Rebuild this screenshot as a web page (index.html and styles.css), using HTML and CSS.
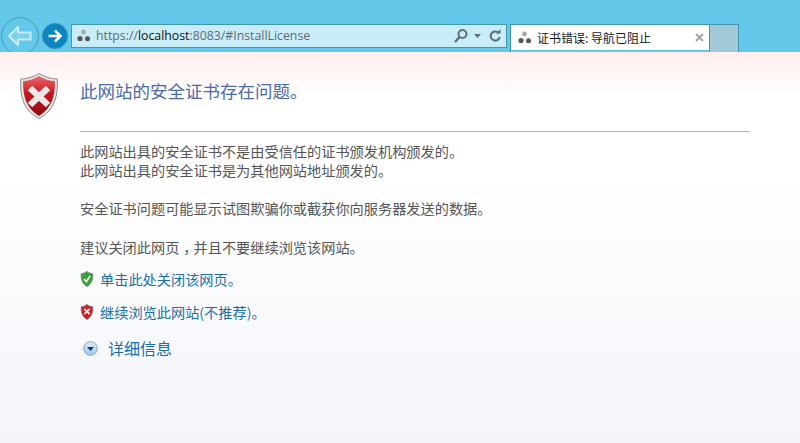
FILE: index.html
```html
<!DOCTYPE html>
<html lang="zh-CN">
<head>
<meta charset="utf-8">
<title>证书错误: 导航已阻止</title>
<link rel="stylesheet" href="styles.css">
</head>
<body>
<header class="toolbar">
  <svg class="back" width="40" height="40" viewBox="0 0 40 40">
    <circle cx="19" cy="19" r="18.500" fill="#63c8ea" stroke="#4a9db8" stroke-width="1"/>
    <path d="M17 10 L8 19 L17 28 V22.500 H29.500 V15.500 H17 Z" fill="#7fcfe9" stroke="#c4ecf8" stroke-width="2.200" stroke-linejoin="round"/>
  </svg>
  <svg class="forward" width="26" height="26" viewBox="0 0 26 26">
    <circle cx="13" cy="13" r="12.500" fill="#0a85c2" stroke="#3f8aa8"/>
    <path d="M6.500 13 H18 M13 7.500 L18.500 13 L13 18.500" fill="none" stroke="#fff" stroke-width="2.600"/>
  </svg>
  <div class="address">
    <svg class="site" width="14" height="14" viewBox="0 0 14 14">
      <circle cx="6.500" cy="3" r="2.400" fill="#a8a8a8"/>
      <circle cx="3" cy="9.500" r="2.600" fill="#555"/>
      <circle cx="10.500" cy="9.800" r="2.500" fill="#555"/>
    </svg>
    <span class="url">https://<b class="host">localhost</b>:8083/#InstallLicense</span>
    <svg class="tool-search" width="27" height="16" viewBox="0 0 27 16">
      <circle cx="8.500" cy="6" r="4" fill="none" stroke="#5f6f75" stroke-width="2"/>
      <path d="M5.500 9 L1 14" stroke="#5f6f75" stroke-width="2.400"/>
      <path d="M20 6 H27 L23.500 10 Z" fill="#5f6f75"/>
    </svg>
    <svg class="tool-refresh" width="14" height="16" viewBox="0 0 14 16">
      <path d="M10.800 5 A4.600 4.600 0 1 0 11.800 9" fill="none" stroke="#5f6f75" stroke-width="2"/>
      <path d="M8 5.500 H12.500 V1 Z" fill="#5f6f75"/>
    </svg>
  </div>
  <div class="tab">
    <div class="tab-active">
      <svg class="site" width="14" height="14" viewBox="0 0 14 14">
        <circle cx="6.500" cy="3" r="2.400" fill="#a8a8a8"/>
        <circle cx="3" cy="9.500" r="2.600" fill="#555"/>
        <circle cx="10.500" cy="9.800" r="2.500" fill="#555"/>
      </svg>
      <span class="tab-title">证书错误: 导航已阻止</span>
      <svg class="tab-close" width="9" height="9" viewBox="0 0 9 9">
        <path d="M1 1 L8 8 M8 1 L1 8" stroke="#a5a5a5" stroke-width="2"/>
      </svg>
    </div>
    <div class="tab-new"></div>
  </div>
</header>
<main class="page">
  <div class="heading">
    <svg class="shield-big" width="40" height="48" viewBox="0 0 40 48">
      <defs>
        <linearGradient id="rb" x1="0" y1="0" x2="0" y2="1">
          <stop offset="0" stop-color="#e8686c"/>
          <stop offset="0.450" stop-color="#c8141e"/>
          <stop offset="1" stop-color="#8e0a10"/>
        </linearGradient>
      </defs>
      <path d="M19 1.500 C13 5 7 7 .8 7 C0 24 3 38 19 46.500 C35 38 38 24 37.200 7 C31 7 25 5 19 1.500 Z" fill="#e6e6e6" stroke="#8c8c8c"/>
      <path d="M19 4 C14 7 8 9 3 9 C3 24 6 36 19 44 C32 36 35 24 35 9 C30 9 24 7 19 4 Z" fill="url(#rb)"/>
      <path d="M10 16 L28 33 M28 16 L10 33" stroke="#ece8e8" stroke-width="6.500"/>
    </svg>
    <h1 class="title">此网站的安全证书存在问题。</h1>
  </div>
  <hr class="rule">
  <p class="text">此网站出具的安全证书不是由受信任的证书颁发机构颁发的。<br>此网站出具的安全证书是为其他网站地址颁发的。</p>
  <p class="text gap-a">安全证书问题可能显示试图欺骗你或截获你向服务器发送的数据。</p>
  <p class="text gap-b">建议关闭此网页<span class="comma">，</span>并且不要继续浏览该网站。</p>
  <div class="link-row first">
    <svg width="14" height="16" viewBox="0 0 15 18">
      <path d="M7.500 .5 C5.500 2 3 3 1 3 C.5 9 2 14 7.500 17.500 C13 14 14.500 9 14 3 C12 3 9.500 2 7.500 .5 Z" fill="#35a33b" stroke="#7b8a7c"/>
      <path d="M4 9 L6.800 12 L11 5.500" fill="none" stroke="#fff" stroke-width="2"/>
    </svg>
    <a class="link">单击此处关闭该网页。</a>
  </div>
  <div class="link-row second">
    <svg width="14" height="16" viewBox="0 0 15 18">
      <path d="M7.500 .5 C5.500 2 3 3 1 3 C.5 9 2 14 7.500 17.500 C13 14 14.500 9 14 3 C12 3 9.500 2 7.500 .5 Z" fill="#c9202c" stroke="#8a7b7c"/>
      <path d="M4.500 5.500 L10.500 11.500 M10.500 5.500 L4.500 11.500" stroke="#f2eaea" stroke-width="2"/>
    </svg>
    <a class="link">继续浏览此网站(不推荐)。</a>
  </div>
  <div class="details">
    <svg width="15" height="15" viewBox="0 0 15 15">
      <defs>
        <linearGradient id="bb" x1="0" y1="0" x2="0" y2="1">
          <stop offset="0" stop-color="#e4f0fa"/>
          <stop offset="1" stop-color="#9fc6e8"/>
        </linearGradient>
      </defs>
      <circle cx="7.500" cy="7.500" r="6.800" fill="url(#bb)" stroke="#7fa6c6"/>
      <path d="M4 6 H11 L7.500 10 Z" fill="#123a7a"/>
    </svg>
    <a class="details-text">详细信息</a>
  </div>
</main>
</body>
</html>
```
FILE: styles.css
```css
* { box-sizing: border-box; }
html, body { margin: 0; height: 100%; }
body {
  width: 800px;
  height: 443px;
  overflow: hidden;
  display: flex;
  flex-direction: column;
  font-family: "Noto Sans CJK SC", "Noto Sans", sans-serif;
}
.toolbar {
  height: 52px;
  flex: none;
  background: #63c8ea;
  display: flex;
  align-items: flex-start;
  padding: 17px 0 0 1px;
  overflow: hidden;
}
.back { flex: none; }
.forward { flex: none; margin: 6px 0 0 1px; }
.address {
  flex: none;
  width: 436px;
  height: 24px;
  margin: 7px 0 0 3px;
  background: #c9edf8;
  border: 1px solid #4296ae;
  display: flex;
  align-items: center;
  padding: 0 4px 0 5px;
}
.site { flex: none; }
.url {
  margin-left: 5px;
  font: 12.300px/22px "Open Sans", "Liberation Sans", sans-serif;
  color: #5f6b70;
  flex: 1;
  white-space: nowrap;
}
.host { font-weight: 400; color: #111; }
.tool-search { flex: none; margin-right: 7px; }
.tool-refresh { flex: none; }
.tab {
  flex: none;
  margin: 7px 0 0 3px;
  width: 229px;
  height: 28px;
  display: flex;
  border: 1px solid #4296ae;
  border-bottom: 0;
}
.tab-active {
  width: 199px;
  background: #fff;
  display: flex;
  align-items: center;
  padding: 0 5px 0 7px;
  border-right: 1px solid #4296ae;
  border-bottom: 2px solid #63c8ea;
}
.tab-title {
  margin-left: 5px;
  flex: 1;
  font-size: 12px;
  line-height: 20px;
  color: #1a1a1a;
}
.tab-close { flex: none; }
.tab-new { flex: 1; background: #a2c9d8; }
.page {
  flex: 1;
  padding: 20px 50px 0 20px;
  background: linear-gradient(#ffeeee 0, #fff 46px, #fff 120px, #f4f5fa 100%);
}
.heading { display: flex; align-items: flex-start; }
.shield-big { flex: none; }
.title {
  margin: 5px 0 0 20px;
  font-size: 17.500px;
  line-height: 27px;
  font-weight: 400;
  color: #4a6aa8;
}
.rule {
  margin: 11px 0 0 60px;
  border: 0;
  border-top: 1px solid #b4b4b4;
  height: 0;
}
.text {
  margin: 10px 0 0 60px;
  font-size: 14.200px;
  line-height: 19px;
  color: #555;
}
.gap-a { margin-top: 19px; }
.gap-b { margin-top: 20px; }
.comma { padding-left: 4px; letter-spacing: -4px; }
.link-row {
  display: flex;
  align-items: center;
  margin-left: 60px;
  gap: 6px;
  height: 20px;
}
.first { margin-top: 12px; }
.second { margin-top: 13px; }
.link {
  font-size: 14.200px;
  line-height: 20px;
  color: #1a6fa8;
}
.details {
  display: flex;
  align-items: center;
  margin: 15px 0 0 63px;
  gap: 10px;
  height: 22px;
}
.details-text {
  font-size: 16px;
  line-height: 22px;
  color: #1a6fa8;
}
```
